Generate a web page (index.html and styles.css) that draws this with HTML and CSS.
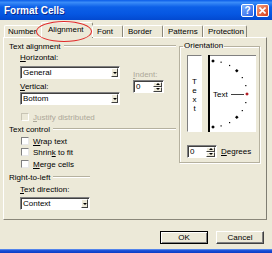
FILE: index.html
```html
<!DOCTYPE html>
<html lang="en">
<head>
    <meta charset="UTF-8">
    <title>Format Cells</title>
    <link rel="stylesheet" href="styles.css">
</head>
<body>

<div class="window">
    <!-- title bar -->
    <div class="titlebar">
        <span class="title">Format Cells</span>
        <div class="caption-buttons">
            <span class="cap-btn help">?</span>
            <span class="cap-btn close">
                <svg width="7" height="7" viewBox="0 0 7 7"><path d="M0.5 0.5 L6.5 6.5 M6.5 0.5 L0.5 6.5" stroke="#fff" stroke-width="1.6"/></svg>
            </span>
        </div>
    </div>

    <!-- tabs -->
    <div class="tabstrip">
        <span class="tab tab-number">Number</span>
        <span class="tab tab-alignment active">Alignment</span>
        <span class="tab tab-font">Font</span>
        <span class="tab tab-border">Border</span>
        <span class="tab tab-patterns">Patterns</span>
        <span class="tab tab-protection">Protection</span>
    </div>

    <div class="panel">
        <div class="main">
            <div class="group-title">Text alignment</div>
            <div class="align-body">
                <div class="fields">
                    <div class="label"><u>H</u>orizontal:</div>
                    <div class="combo gap-top"><span class="combo-value">General</span><span class="drop"></span></div>
                    <div class="label gap-top"><u>V</u>ertical:</div>
                    <div class="combo"><span class="combo-value">Bottom</span><span class="drop"></span></div>
                </div>
                <div class="indent">
                    <div class="label disabled"><u>I</u>ndent:</div>
                    <div class="spin indent-spin"><span class="spin-value">0</span><span class="spin-btns"><span class="up"></span><span class="down"></span></span></div>
                </div>
            </div>
            <div class="check disabled justify"><span class="box"></span><span><u>J</u>ustify distributed</span></div>

            <div class="group-title text-control">Text control</div>
            <div class="check wrap"><span class="box"></span><span><u>W</u>rap text</span></div>
            <div class="check shrink"><span class="box"></span><span>Shrin<u>k</u> to fit</span></div>
            <div class="check merge"><span class="box"></span><span><u>M</u>erge cells</span></div>

            <div class="group-title short rtl">Right-to-left</div>
            <div class="label sub direction-label"><u>T</u>ext direction:</div>
            <div class="combo sub direction"><span class="combo-value">Context</span><span class="drop"></span></div>
        </div>

        <fieldset class="orientation">
            <legend>Orientation</legend>
            <div class="dial-row">
                <div class="vtext"><span>T</span><span>e</span><span>x</span><span>t</span></div>
                <svg class="dial" width="48" height="77" viewBox="0 0 48 77">
                    <rect x="0" y="0" width="48" height="77" fill="#fff"/>
                    <path d="M0 0.5 H48" stroke="#808080"/>
                    <path d="M1 0 V77" stroke="#000" stroke-width="2"/>
                    <g fill="#000">
                        <rect x="12.5" y="6.6" width="1.2" height="1.2"/>
                        <rect x="21" y="9.9" width="1.2" height="1.2"/>
                        <rect x="33.7" y="22" width="1.2" height="1.2"/>
                        <rect x="37.2" y="30" width="1.2" height="1.2"/>
                        <rect x="37.2" y="47" width="1.2" height="1.2"/>
                        <rect x="33.7" y="55" width="1.2" height="1.2"/>
                        <rect x="21" y="67" width="1.2" height="1.2"/>
                        <rect x="12.5" y="70.3" width="1.2" height="1.2"/>
                        <path d="M5 4.2 L6.8 6 L5 7.8 L3.2 6 Z"/>
                        <path d="M28.8 13.9 L30.6 15.7 L28.8 17.5 L27 15.7 Z"/>
                        <path d="M28.8 60.5 L30.6 62.3 L28.8 64.1 L27 62.3 Z"/>
                        <path d="M5 70.2 L6.8 72 L5 73.8 L3.2 72 Z"/>
                    </g>
                    <path d="M39 37.2 L40.8 39 L39 40.8 L37.2 39 Z" fill="#b01820"/>
                    <path d="M23 39.5 H36" stroke="#404040"/>
                    <text x="5" y="42" font-family="Liberation Sans, Arial, sans-serif" font-size="8" fill="#000">Text</text>
                </svg>
            </div>
            <div class="degrees-row">
                <div class="spin degree-spin"><span class="spin-value">0</span><span class="spin-btns"><span class="up"></span><span class="down"></span></span></div>
                <span class="degrees-label"><u>D</u>egrees</span>
            </div>
        </fieldset>
    </div>

    <div class="footer">
        <button class="btn default">OK</button>
        <button class="btn">Cancel</button>
    </div>

    <div class="taskbar"></div>

    <!-- red mark round the selected tab -->
    <div class="mark"></div>
</div>

</body>
</html>
```

FILE: styles.css
```css
body {
    margin: 0;
    font-family: "Liberation Sans", Arial, sans-serif;
    font-size: 8px;
    color: #000;
}

.window {
    position: relative;
    width: 272px;
    height: 253px;
    background: #ECE9D8;
    display: flex;
    flex-direction: column;
    overflow: hidden;
}

/* title bar */
.titlebar {
    height: 20px;
    flex-shrink: 0;
    box-sizing: border-box;
    padding: 0 3px 0 4px;
    display: flex;
    align-items: center;
    justify-content: space-between;
    background: linear-gradient(#0a5ce8 0%, #3a8cf8 12%, #0c60e8 35%, #0657e2 70%, #0349d0 100%);
}

.title {
    color: #fff;
    font-weight: bold;
    font-size: 10px;
    text-shadow: 1px 1px #0a2a90;
}

.caption-buttons {
    display: flex;
    gap: 2px;
}

.cap-btn {
    width: 13px;
    height: 13px;
    box-sizing: border-box;
    border: 1px solid #fff;
    border-radius: 2px;
    display: flex;
    align-items: center;
    justify-content: center;
    color: #fff;
    font-weight: bold;
    font-size: 10px;
}

.help {
    background: linear-gradient(135deg, #7aaeff, #2a62e6);
}

.close {
    background: linear-gradient(135deg, #f4a080, #d63c18);
}

/* tabs */
.tabstrip {
    height: 17px;
    flex-shrink: 0;
    box-sizing: border-box;
    padding-left: 4px;
    display: flex;
    align-items: flex-end;
    position: relative;
    z-index: 1;
}

.tab {
    height: 12px;
    box-sizing: border-box;
    padding: 0 0 0 4px;
    line-height: 11px;
    white-space: nowrap;
    border: 1px solid;
    border-color: #fff #8a877a #ECE9D8 #fff;
    border-bottom: none;
    border-radius: 2px 2px 0 0;
}

.tab-number { width: 38px; padding-left: 3px; }
.tab-alignment { width: 52px; padding-left: 6px; }
.tab-font { width: 31px; }
.tab-border { width: 40px; }
.tab-patterns { width: 40px; }
.tab-protection { width: 44px; }

.tab.active {
    height: 16px;
    margin: 0 -1px -1px -1px;
    line-height: 14px;
    background: #ECE9D8;
}

.mark {
    position: absolute;
    left: 36px;
    top: 21px;
    width: 56px;
    height: 21px;
    box-sizing: border-box;
    border: 1px solid #e02828;
    border-radius: 50%;
    z-index: 2;
}

/* tab panel */
.panel {
    margin-left: 3px;
    width: 264px;
    height: 183px;
    flex-shrink: 0;
    box-sizing: border-box;
    border: 1px solid;
    border-color: #fff #7f7d72 #8a877a #fff;
    display: flex;
    align-items: flex-start;
}

.main {
    width: 172px;
    box-sizing: border-box;
    padding: 3px 0 0 5px;
    display: flex;
    flex-direction: column;
}

.group-title {
    height: 10px;
    display: flex;
    align-items: center;
    gap: 3px;
}

.group-title::after {
    content: "";
    flex: 1;
    border-top: 1px solid #b5b19f;
    border-bottom: 1px solid #fff;
}

.group-title.short {
    width: 81px;
}

.label {
    height: 10px;
    line-height: 10px;
}

.disabled {
    color: #aca899;
}

.gap-top {
    margin-top: 3px;
}

.sub {
    margin-left: 11px;
}

.align-body {
    display: flex;
    margin: 2px 0 0 11px;
}

.fields {
    width: 100px;
    display: flex;
    flex-direction: column;
}

.indent {
    margin-left: 13px;
    padding-top: 17px;
}

/* combo boxes */
.combo {
    height: 13px;
    box-sizing: border-box;
    padding-left: 2px;
    background: #fff;
    border: 1px solid;
    border-color: #808080 #fff #fff #808080;
    box-shadow: inset 1px 1px #404040;
    display: flex;
    align-items: center;
}

.combo-value {
    flex: 1;
}

.drop {
    width: 7px;
    height: 9px;
    margin-right: 1px;
    box-sizing: border-box;
    background: #ECE9D8;
    border: 1px solid;
    border-color: #fff #404040 #404040 #fff;
    display: flex;
    align-items: center;
    justify-content: center;
}

.drop::before {
    content: "";
    border-left: 2px solid transparent;
    border-right: 2px solid transparent;
    border-top: 2px solid #000;
}

.direction {
    width: 70px;
    margin-top: 2px;
}

.direction-label {
    margin-top: 3px;
}

/* spinners */
.spin {
    height: 13px;
    box-sizing: border-box;
    padding-left: 2px;
    background: #fff;
    border: 1px solid;
    border-color: #808080 #fff #fff #808080;
    box-shadow: inset 1px 1px #404040;
    display: flex;
    align-items: center;
}

.spin-value {
    flex: 1;
}

.spin-btns {
    width: 9px;
    height: 10px;
    margin-right: 1px;
    display: flex;
    flex-direction: column;
}

.spin-btns span {
    flex: 1;
    box-sizing: border-box;
    background: #ECE9D8;
    border: 1px solid;
    border-color: #fff #404040 #404040 #fff;
    display: flex;
    align-items: center;
    justify-content: center;
}

.spin-btns .up::before {
    content: "";
    border-left: 2px solid transparent;
    border-right: 2px solid transparent;
    border-bottom: 2px solid #000;
}

.spin-btns .down::before {
    content: "";
    border-left: 2px solid transparent;
    border-right: 2px solid transparent;
    border-top: 2px solid #000;
}

.indent-spin {
    width: 31px;
}

.degree-spin {
    width: 30px;
}

/* check boxes */
.check {
    height: 10px;
    margin-left: 12px;
    display: flex;
    align-items: center;
    gap: 4px;
}

.box {
    width: 8px;
    height: 8px;
    box-sizing: border-box;
    background: #fff;
    border: 1px solid;
    border-color: #808080 #e8e8e8 #e8e8e8 #808080;
}

.check.disabled .box {
    background: #ECE9D8;
    border-color: #c8c4b4 #fff #fff #c8c4b4;
}

.justify {
    margin-top: 7px;
}

.text-control {
    margin-top: 2px;
}

.wrap {
    margin-top: 2px;
}

.shrink {
    margin-top: 1px;
}

.merge {
    margin-top: 2px;
}

.rtl {
    margin-top: 3px;
}

/* orientation */
.orientation {
    margin: 3px 0 0 3px;
    width: 81px;
    box-sizing: border-box;
    padding: 0 0 4px 7px;
    border: 1px solid #b5b19f;
    box-shadow: inset 1px 1px #fff, 1px 1px #fff;
}

.orientation legend {
    margin-left: -4px;
    padding: 0 1px;
    height: 10px;
    line-height: 10px;
}

.dial-row {
    margin-top: 4px;
    display: flex;
    gap: 6px;
}

.vtext {
    width: 15px;
    height: 77px;
    box-sizing: border-box;
    padding-top: 21px;
    background: #fff;
    border: 1px solid;
    border-color: #808080 #fff #fff #808080;
    display: flex;
    flex-direction: column;
    align-items: center;
    line-height: 9px;
}

.dial {
    display: block;
}

.degrees-row {
    margin-top: 13px;
    display: flex;
    align-items: center;
    gap: 4px;
}

/* buttons */
.footer {
    height: 29px;
    flex-shrink: 0;
    box-sizing: border-box;
    padding: 11px 8px 0 0;
    display: flex;
    justify-content: flex-end;
    align-items: flex-start;
    gap: 8px;
}

.btn {
    width: 48px;
    height: 13px;
    padding: 0;
    font-family: "Liberation Sans", Arial, sans-serif;
    font-size: 8px;
    color: #000;
    background: #ECE9D8;
    border: 1px solid;
    border-color: #fff #404040 #404040 #fff;
    box-shadow: inset -1px -1px #808080;
}

.btn.default {
    border: 1px solid #000;
    box-shadow: inset 1px 1px #fff, inset -1px -1px #808080;
}

.taskbar {
    height: 4px;
    flex-shrink: 0;
    background: linear-gradient(#6c9cf4, #1a4fd8 40%, #0c3cc4);
}
```
